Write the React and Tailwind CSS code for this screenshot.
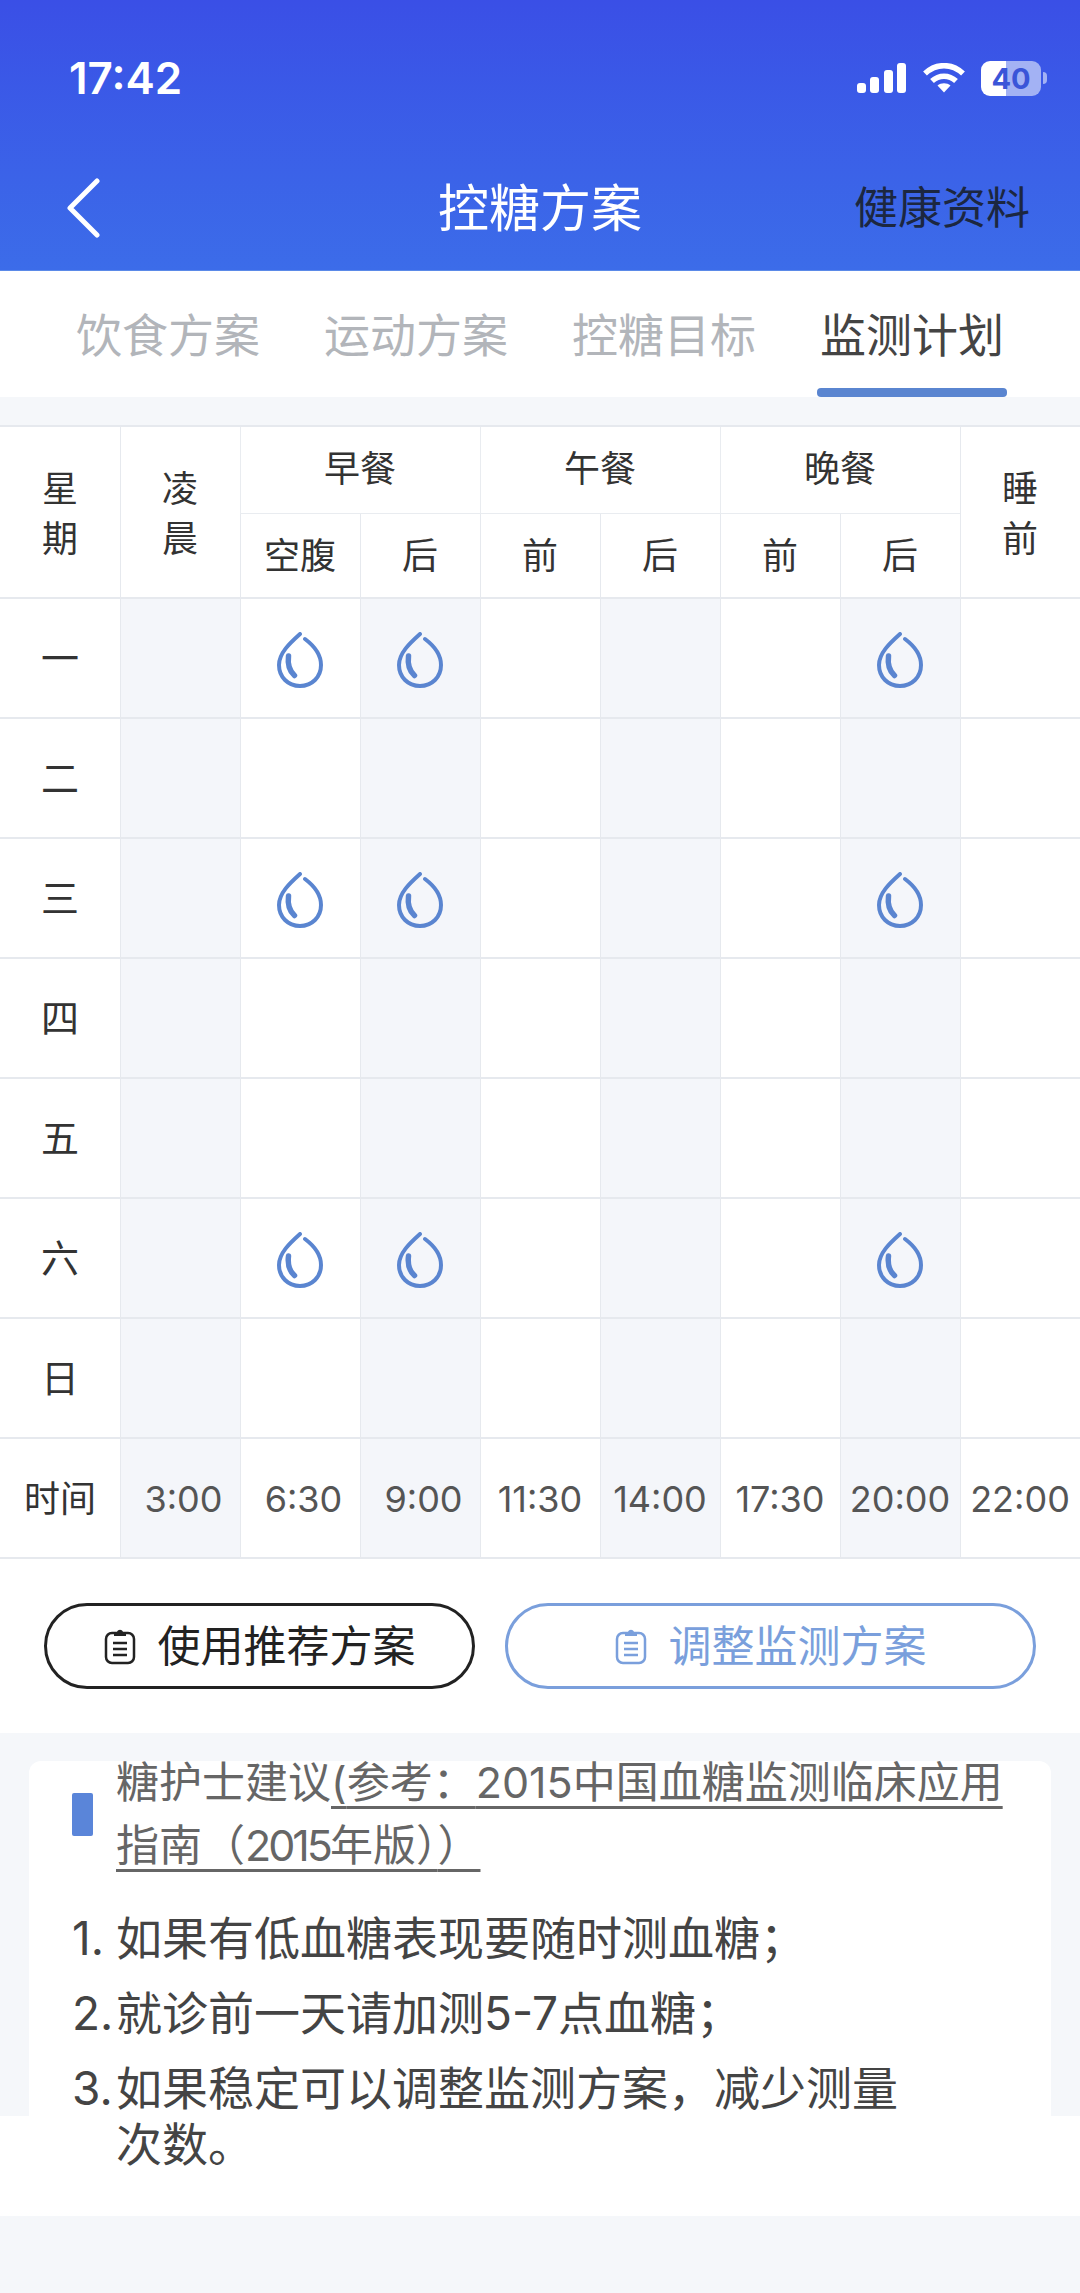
import React from "react";

const jours = ["一", "二", "三", "四", "五", "六", "日"];
const heures = ["3:00", "6:30", "9:00", "11:30", "14:00", "17:30", "20:00", "22:00"];
const grises = [0, 2, 4, 6];
// lignes et colonnes où il y a une mesure
const lignesGoutte = [0, 2, 5];
const colonnesGoutte = [1, 2, 6];

// ponctuation pleine largeur
const PO = "\uFF08";
const PF = "\uFF09";
const DP = "\uFF1A";
const PV = "\uFF1B";
const VG = "\uFF0C";

function Goutte() {
  return (
    <svg width="46" height="56" viewBox="0 0 46 56" fill="none" strokeLinecap="round">
      <path d="M23 2C13 11 2 21 2 33c0 12 9 21 21 21s21-9 21-21c0-11-8-20-16-26" stroke="#5a85d0" strokeWidth="4" />
      <path d="M11.500 24c-1 8 1 15 6 19.500" stroke="#5a85d0" strokeWidth="5.500" />
    </svg>
  );
}

function Clipboard({ couleur }) {
  return (
    <svg width="32" height="38" viewBox="0 0 32 38" fill="none">
      <rect x="2" y="6" width="28" height="30" rx="6" stroke={couleur} strokeWidth="2.500" />
      <path d="M10 7c0-2 2-2 3-2 1-3 5-3 6 0 1 0 3 0 3 2v2H10z" fill={couleur} />
      <path d="M9 16h14M9 22h14M9 28h14" stroke={couleur} strokeWidth="2.500" />
    </svg>
  );
}

function StatusBar() {
  return (
    <div className="h-[60px] mt-[48px] pl-[69px] pr-[33px] flex items-center justify-between">
      <span className="text-[44px] font-semibold leading-none text-white">17:42</span>
      <div className="flex items-center">
        <svg width="50" height="30" viewBox="0 0 50 30" fill="white">
          <rect x="0" y="20" width="9" height="10" rx="3" />
          <rect x="13" y="14" width="9" height="16" rx="3" />
          <rect x="27" y="7" width="9" height="23" rx="3" />
          <rect x="40" y="0" width="9" height="30" rx="3" />
        </svg>
        <svg className="ml-[15px]" width="44" height="30" viewBox="0 0 44 30" fill="none" stroke="white" strokeWidth="5.500">
          <path d="M3 10.500C14 0 30 0 41 10.500" />
          <path d="M10 18C17 11.500 27 11.500 34 18" />
          <path d="M22 29.500l-6.500-7c3.500-3 9.500-3 13 0z" fill="white" stroke="none" />
        </svg>
        <div className="ml-[15px] w-[60px] h-[35px] rounded-[9px] bg-[linear-gradient(90deg,#ffffff_41%,#a3b2f4_41%)] flex items-center justify-center text-[29px] font-bold leading-none text-[#3a55d8]">
          40
        </div>
        <div className="ml-[2px] w-[4px] h-[12px] rounded-r-full bg-[#a3b2f4]" />
      </div>
    </div>
  );
}

function Navbar() {
  return (
    <div className="mt-[40px] h-[120px] px-[66px] grid grid-cols-[1fr_auto_1fr] items-center">
      <svg width="34" height="60" viewBox="0 0 34 60" fill="none" stroke="white" strokeWidth="5" strokeLinecap="round" strokeLinejoin="round">
        <path d="M31 3L4 30l27 27" />
      </svg>
      <span className="text-[51px] leading-none text-white">控糖方案</span>
      <span className="justify-self-end -mr-[16px] whitespace-nowrap text-[44px] leading-none text-[#1c2740]">健康资料</span>
    </div>
  );
}

function Tabs() {
  return (
    <div className="h-[127px] bg-white pl-[76px] flex gap-[64px] border-t border-[#5b8ae8]">
      {["饮食方案", "运动方案", "控糖目标"].map((t) => (
        <div key={t} className="pt-[39px] text-[46px] leading-[50px] text-[#b2b5ba]">{t}</div>
      ))}
      <div className="relative pt-[39px] text-[46px] leading-[50px] text-[#444444]">
        监测计划
        <div className="absolute left-[-3px] right-[-3px] bottom-0 h-[9px] rounded-[4px] bg-[#5a85d0]" />
      </div>
    </div>
  );
}

function Table() {
  const ligne = "border-b-2 border-l border-[#e6e9ee]";
  return (
    <div className="bg-white border-t-2 border-[#e6e9ee] text-[36px] text-[#333333]">
      <div className="grid grid-cols-9 grid-rows-[87px_85px]">
        <div className="row-span-2 flex items-center justify-center text-center leading-[50px] pt-[4px] border-b-2 border-[#e6e9ee]">星<br />期</div>
        <div className={`row-span-2 flex items-center justify-center text-center leading-[50px] pt-[4px] pr-[1px] ${ligne}`}>凌<br />晨</div>
        {["早餐", "午餐", "晚餐"].map((t) => (
          <div key={t} className="col-span-2 flex items-center justify-center pb-[2px] pr-[1px] border-b border-l border-[#e9ecf0]">{t}</div>
        ))}
        <div className={`row-span-2 flex items-center justify-center text-center leading-[50px] pt-[4px] pr-[1px] ${ligne}`}>睡<br />前</div>
        {["空腹", "后", "前", "后", "前", "后"].map((t, i) => (
          <div key={i} className={`flex items-center justify-center pr-[1px] ${ligne}`}>{t}</div>
        ))}
      </div>
      {jours.map((j, l) => (
        <div key={j} className="grid grid-cols-9 h-[120px]">
          <div className="flex items-center justify-center text-[38px] border-b-2 border-[#e6e9ee]">{j}</div>
          {heures.map((h, c) => (
            <div
              key={h}
              className={`flex items-center justify-center pt-[4px] pr-[1px] ${ligne} ${grises.includes(c) ? "bg-[#f4f6fa]" : ""}`}
            >
              {lignesGoutte.includes(l) && colonnesGoutte.includes(c) && <Goutte />}
            </div>
          ))}
        </div>
      ))}
      <div className="grid grid-cols-9 h-[120px]">
        <div className="flex items-center justify-center pt-[2px] border-b-2 border-[#e6e9ee]">时间</div>
        {heures.map((h, c) => (
          <div
            key={h}
            className={`flex items-center justify-center pt-[2px] text-[36px] text-[#555555] ${ligne} ${grises.includes(c) ? "bg-[#f4f6fa]" : ""} ${h.length === 4 ? "pl-[6px]" : "pr-[1px]"}`}
          >
            {h}
          </div>
        ))}
      </div>
    </div>
  );
}

function Boutons() {
  return (
    <div className="h-[174px] bg-white px-[44px] pt-[44px] flex gap-[30px]">
      <div className="w-[431px] h-[86px] rounded-full border-[3px] border-[#222222] flex items-center justify-center gap-[22px] text-[43px] text-[#222222]">
        <Clipboard couleur="#222222" />
        使用推荐方案
      </div>
      <div className="flex-1 h-[86px] rounded-full border-[3px] border-[#7a9fdc] flex items-center justify-center gap-[22px] text-[43px] text-[#7a9fdc]">
        <Clipboard couleur="#7a9fdc" />
        调整监测方案
      </div>
    </div>
  );
}

function Conseils() {
  const items = [
    ["1.", `如果有低血糖表现要随时测血糖${PV}`],
    ["2.", `就诊前一天请加测5-7点血糖${PV}`],
    ["3.", `如果稳定可以调整监测方案${VG}减少测量`],
  ];
  const souligne = "underline decoration-[3px] underline-offset-[8px] [text-decoration-skip-ink:none]";
  return (
    <div className="pt-[28px]">
      <div className="mx-[29px] h-[355px] rounded-t-[12px] bg-white pl-[43px] flex flex-col">
        <div className="-mt-[10px] flex items-center gap-[23px]">
          <div className="w-[21px] h-[43px] rounded-[2px] bg-[#5a85d9]" />
          <div className="text-[43px] leading-[63px] text-[#666666] whitespace-nowrap">
            糖护士建议<span className={souligne}>({`参考${DP}`}2015中国血糖监测临床应用</span>
            <br />
            <span className={souligne}>{`指南${PO}`}<span className="tracking-[-3px]">2015</span>年版{PF}{PF}</span>
          </div>
        </div>
        <div className="mt-[24px] text-[46px] leading-[75px] text-[#444444]">
          {items.map(([n, t]) => (
            <div key={n} className="flex">
              <span className="w-[44px] shrink-0">{n}</span>
              <span className="whitespace-nowrap">{t}</span>
            </div>
          ))}
        </div>
      </div>
      <div className="h-[100px] bg-white pl-[116px] text-[46px] leading-[57px] text-[#444444]">次数。</div>
    </div>
  );
}

export default function App() {
  return (
    <div className="w-[1080px] h-[2293px] overflow-hidden bg-[#f5f7fa] font-[Inter,'Noto_Sans_CJK_SC',sans-serif]">
      <div className="h-[270px] flex flex-col bg-gradient-to-b from-[#3a4fe6] to-[#3c6ce9]">
        <StatusBar />
        <Navbar />
      </div>
      <Tabs />
      <div className="h-[28px]" />
      <Table />
      <Boutons />
      <Conseils />
    </div>
  );
}
